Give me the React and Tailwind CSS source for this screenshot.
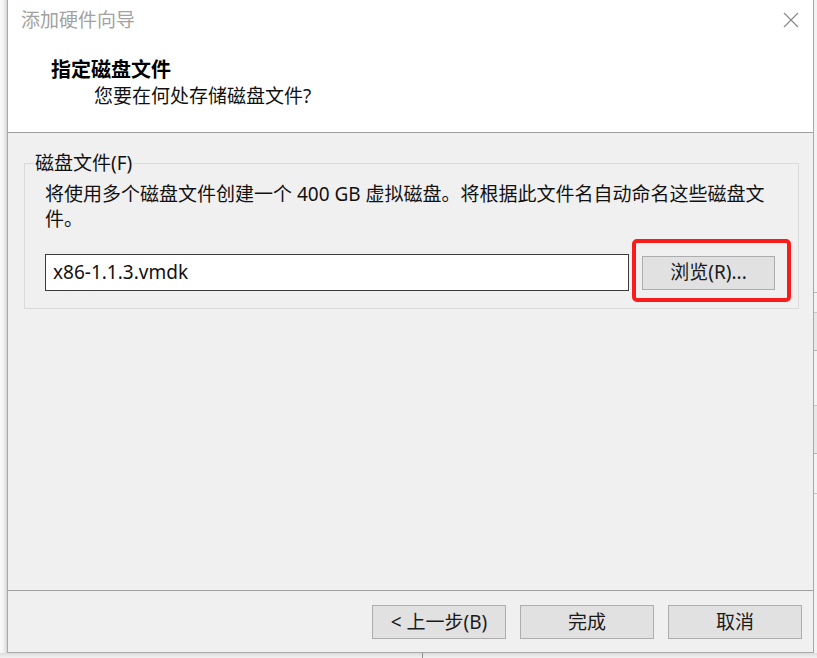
import React from 'react';

const WinButton = ({ children, className = '' }) => (
  <div
    className={`h-[34px] flex items-center justify-center bg-[#e1e1e1] border border-[#adadad] text-[#1a1a1a] ${className}`}
  >
    {children}
  </div>
);

const App = () => {
  return (
    <div className="w-[817px] h-[658px] overflow-hidden bg-[#efefef] flex flex-col font-['Noto_Sans','Noto_Sans_CJK_SC',sans-serif] text-[19px] leading-[25px] text-[#111]">
      <div className="flex h-[653px]">
        {/* desktop edge + shadow */}
        <div className="w-[7px] bg-gradient-to-r from-[#fbfbfb] via-[#f2f2f2] to-[#d6d6d6]" />

        {/* dialog */}
        <div className="w-[807px] flex flex-col bg-[#f0f0f0] border-x border-b border-[#a8a8a8]">
          {/* title bar + wizard header */}
          <div className="h-[133px] bg-white border-b border-[#a0a0a0] flex flex-col">
            <div className="h-[40px] flex items-center justify-between pl-[13px] pr-[14px]">
              <span className="text-[#a2a2a2]">添加硬件向导</span>
              <svg width="16" height="16" viewBox="0 0 16 16" className="mt-[-1px]">
                <path d="M1 1 L15 15 M15 1 L1 15" stroke="#8a8a8a" strokeWidth="1.2" fill="none" />
              </svg>
            </div>
            <div className="pl-[43px] pt-[17px]">
              <div className="font-bold text-[20px] text-black">指定磁盘文件</div>
              <div className="pl-[43px] mt-[2px] text-[#111]">您要在何处存储磁盘文件?</div>
            </div>
          </div>

          {/* body */}
          <div className="h-[458px] border-b border-[#a0a0a0] pl-[16px] pr-[14px]">
            <fieldset className="mt-[19px] border border-[#dadada] pl-[9px] pr-[10px] pb-[17px] pt-[8px] m-0">
              <legend className="px-[1px] leading-[22px] text-[#111]">磁盘文件(F)</legend>
              <div className="pl-[11px]">
                <p className="text-[#111]">
                  将使用多个磁盘文件创建一个 400 GB 虚拟磁盘。将根据此文件名自动命名这些磁盘文
                  <br />
                  件。
                </p>
                <div className="relative mt-[22px] flex items-center gap-[13px]">
                  <div className="w-[584px] h-[37px] bg-white border border-[#3c3c3c] flex items-center pl-[7px] text-[#111]">
                    x86-1.1.3.vmdk
                  </div>
                  <WinButton className="w-[133px]">浏览(R)...</WinButton>
                  <div className="absolute left-[587px] top-[-15px] w-[159px] h-[63px] border-[4px] border-[#f81c1c] rounded-[5px]" />
                </div>
              </div>
            </fieldset>
          </div>

          {/* footer buttons */}
          <div className="flex-1 flex justify-end items-start gap-[14px] pt-[14px] pr-[11px]">
            <WinButton className="w-[134px]">&lt; 上一步(B)</WinButton>
            <WinButton className="w-[134px]">完成</WinButton>
            <WinButton className="w-[134px]">取消</WinButton>
          </div>
        </div>

        {/* background window peeking on the right */}
        <div className="flex-1 flex flex-col bg-[#f3f3f3]">
          <div className="h-[292px]" />
          <div className="h-[20px] border-t border-[#b5b5b5]" />
          <div className="h-[38px] border-t border-[#c8c8c8] bg-[#e8e8e8]" />
          <div className="h-[55px] border-t border-[#b5b5b5]" />
          <div className="h-[48px] border-t border-[#c8c8c8] bg-[#e8e8e8]" />
          <div className="h-[40px] border-t border-[#b5b5b5]" />
          <div className="flex-1 border-t border-[#c8c8c8]" />
        </div>
      </div>

      {/* strip of the window behind */}
      <div className="flex-1 flex bg-gradient-to-b from-[#dcdcdc] to-[#f2f2f2]">
        <div className="w-[422px]" />
        <div className="flex-1 border-l border-[#8a8a8a]" />
      </div>
    </div>
  );
};

export default App;
